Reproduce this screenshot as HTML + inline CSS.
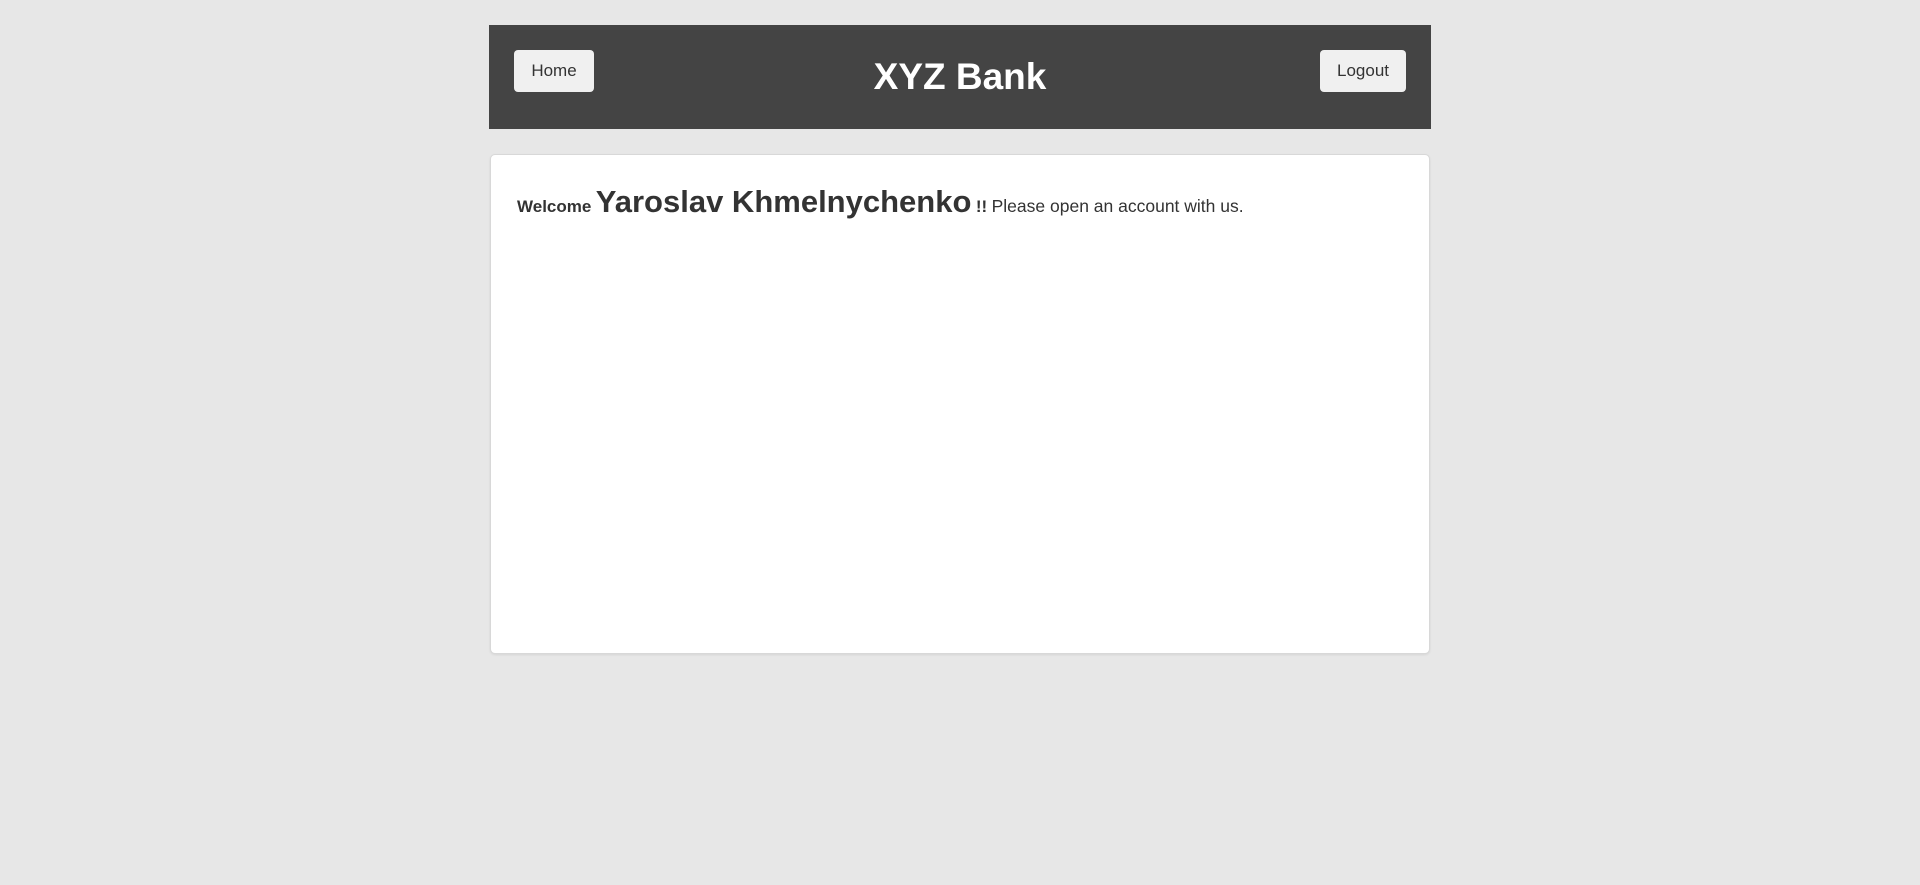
<!DOCTYPE html>
<html><head><style>
body{margin:0;background:#e7e7e7;font-family:"Liberation Sans",Arial,sans-serif;color:#333;width:1920px;height:885px;overflow:hidden}
.hdr{position:absolute;left:489px;top:25px;width:942px;height:104px;background:#444}
.btn{position:absolute;top:25px;height:42px;background:#f0f0f0;border-radius:4px;font-size:17px;line-height:42px;text-align:center;color:#333}
.title{position:absolute;left:0;right:0;top:27px;text-align:center;color:#fff;font-weight:bold;font-size:37px;line-height:50px}
.panel{position:absolute;left:490px;top:154px;width:938px;height:498px;background:#fff;border:1px solid #d8d8d8;border-radius:5px;box-shadow:0 1px 2px rgba(0,0,0,.08)}
.w{position:absolute;left:26px;top:29px;white-space:nowrap}
</style></head><body>
<div class="hdr">
<div class="btn" style="left:25px;width:80px">Home</div>
<div class="title">XYZ Bank</div>
<div class="btn" style="left:831px;width:86px">Logout</div>
</div>
<div class="panel"><div class="w"><b style="font-size:17px">Welcome</b> <b style="font-size:31px">Yaroslav Khmelnychenko</b> <b style="font-size:17px">!!</b> <span style="font-size:17.5px">Please open an account with us.</span></div></div>
</body></html>
